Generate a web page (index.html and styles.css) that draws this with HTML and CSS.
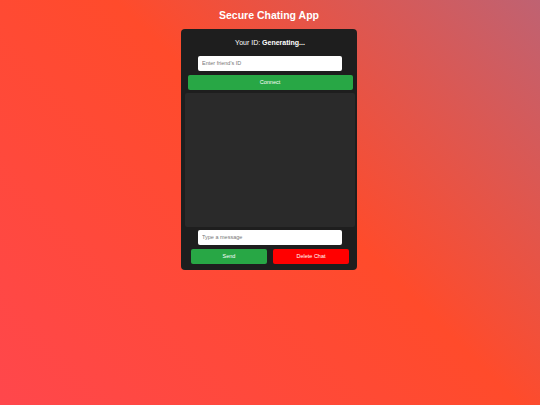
FILE: index.html
```html
<!DOCTYPE html>
<html lang="en">
  <head>
    <meta charset="UTF-8" />
    <meta name="viewport" content="width=device-width, initial-scale=1.0" />
    <title>Secure Chating App</title>
    <link rel="stylesheet" href="styles.css">
  </head>
  <body>
    <h1 class="app-title">Secure Chating App</h1>

    <!-- chat card -->
    <div class="chat-card">
      <p class="my-id">Your ID: <strong>Generating...</strong></p>

      <input class="text-input" type="text" placeholder="Enter friend's ID" />
      <button class="btn btn-connect">Connect</button>

      <!-- messages -->
      <div class="chat-box"></div>

      <input class="text-input" type="text" placeholder="Type a message" />
      <div class="btn-row">
        <button class="btn btn-send">Send</button>
        <button class="btn btn-delete">Delete Chat</button>
      </div>
    </div>
  </body>
</html>
```

FILE: styles.css
```css
body {
  margin: 0;
  height: 405px;
  font-family: "Liberation Sans", Arial, sans-serif;
  background: linear-gradient(45deg, #ff474c 0%, #ff4b2b 55%, #bf6272 100%);
  display: flex;
  flex-direction: column;
  align-items: center;
}

.app-title {
  margin: 8px 2px 0 0;
  height: 21px;
  font-size: 10.5px;
  line-height: 14px;
  color: white;
}

.chat-card {
  width: 176px;
  height: 241px;
  margin-right: 2px;
  box-sizing: border-box;
  padding: 0 1px 0 3px;
  background-color: #1e1e1e;
  border-radius: 4px;
  display: flex;
  flex-direction: column;
  align-items: center;
}

.my-id {
  margin: 10px 0 0;
  height: 17px;
  font-size: 7px;
  color: white;
}

.text-input {
  width: 144px;
  height: 14.5px;
  box-sizing: border-box;
  padding: 0 4px;
  border: none;
  border-radius: 2px;
  background-color: white;
  font-family: inherit;
  font-size: 5.5px;
  outline: none;
}

.text-input::placeholder {
  color: #777;
}

.btn {
  height: 14.5px;
  padding: 0;
  border: none;
  border-radius: 2px;
  color: white;
  font-family: inherit;
  font-size: 5.5px;
  cursor: pointer;
}

.btn-connect {
  width: 165px;
  margin-top: 4.5px;
  background-color: #28a745;
}

.chat-box {
  width: 170px;
  height: 134px;
  margin: 3px 0 3.5px;
  background-color: #2a2a2a;
  border-radius: 2px;
}

.btn-row {
  display: flex;
  gap: 6px;
  margin-top: 4.5px;
}

.btn-send,
.btn-delete {
  width: 76px;
}

.btn-send {
  background-color: #28a745;
}

.btn-delete {
  background-color: #ff0000;
}
```
